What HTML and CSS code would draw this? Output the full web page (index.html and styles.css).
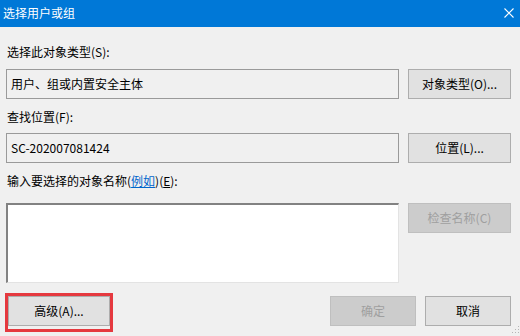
FILE: index.html
```html
<!DOCTYPE html>
<html lang="zh-CN">
<head>
  <meta charset="UTF-8" />
  <title>选择用户或组</title>
  <link rel="stylesheet" href="styles.css">
</head>
<body>

<div class="dialog">
  <header class="titlebar">
    <span class="title">选择用户或组</span>
    <span class="close">
      <svg viewBox="0 0 10 10" width="10" height="10"><path d="M0.5 0.5L9.5 9.5M9.5 0.5L0.5 9.5" stroke="#fff" stroke-width="1.1"/></svg>
    </span>
  </header>

  <main class="content">
    <div class="field-label label-first">选择此对象类型(S):</div>
    <div class="field-row">
      <div class="readonly-box">用户、组或内置安全主体</div>
      <button class="btn">对象类型(O)...</button>
    </div>

    <div class="field-label">查找位置(F):</div>
    <div class="field-row row-tight">
      <div class="readonly-box">SC-202007081424</div>
      <button class="btn">位置(L)...</button>
    </div>

    <div class="field-label">输入要选择的对象名称(<a href="#" class="link">例如</a>)(<u>E</u>):</div>
    <div class="field-row row-names">
      <div class="names-box"></div>
      <button class="btn btn-disabled">检查名称(C)</button>
    </div>
  </main>

  <footer class="footer">
    <button class="btn btn-advanced">高级(A)...</button>
    <div class="footer-actions">
      <button class="btn btn-small btn-disabled">确定</button>
      <button class="btn btn-small">取消</button>
    </div>
    <svg class="grip" viewBox="0 0 9 9" width="9" height="9">
      <rect x="7" y="1" width="1" height="1" fill="#b5b5b5"/>
      <rect x="4" y="4" width="1" height="1" fill="#b5b5b5"/>
      <rect x="7" y="4" width="1" height="1" fill="#b5b5b5"/>
      <rect x="1" y="7" width="1" height="1" fill="#b5b5b5"/>
      <rect x="4" y="7" width="1" height="1" fill="#b5b5b5"/>
      <rect x="7" y="7" width="1" height="1" fill="#b5b5b5"/>
    </svg>
  </footer>
</div>

</body>
</html>
```

FILE: styles.css
```css
:root {
  --dialog-bg: #f0f0f0;
  --title-bg: #0078d7;
  --text-color: #000000;
  --btn-bg: #e1e1e1;
  --btn-border: #adadad;
  --disabled-bg: #cccccc;
  --disabled-border: #bfbfbf;
  --disabled-text: #9f9f9f;
  --box-border: #9a9a9a;
  --link-color: #0066cc;
  --mark-color: #e5393f;
  --font-family: "Noto Sans CJK SC", "Noto Sans", sans-serif;
}

*, *::before, *::after { box-sizing: border-box; }

body {
  margin: 0;
  font-family: var(--font-family);
  font-size: 12px;
  line-height: 16px;
  color: var(--text-color);
  background-color: var(--dialog-bg);
}

.dialog {
  width: 520px;
  height: 336px;
  overflow: hidden;
  display: flex;
  flex-direction: column;
}

.titlebar {
  height: 27px;
  flex-shrink: 0;
  display: flex;
  justify-content: space-between;
  align-items: center;
  padding: 0 6px 1px 3px;
  background-color: var(--title-bg);
  color: #ffffff;
}

.close {
  display: flex;
  width: 10px;
  height: 10px;
  margin-top: -1px;
}

.content {
  padding: 0 9px 0 6px;
}

.field-label {
  margin-top: 10px;
  padding-left: 1px;
  white-space: nowrap;
}

.label-first { margin-top: 17px; }

.link {
  color: var(--link-color);
  text-decoration: underline;
}

.field-row {
  display: flex;
  gap: 9px;
  margin-top: 9px;
  height: 30px;
}

.row-tight { margin-top: 8px; }

.row-names {
  margin-top: 14px;
  height: 80px;
  align-items: flex-start;
}

.readonly-box {
  flex: 1;
  display: flex;
  align-items: center;
  padding: 0 0 1px 4px;
  border: 1px solid var(--box-border);
  background-color: var(--dialog-bg);
  white-space: nowrap;
}

.names-box {
  flex: 1;
  align-self: stretch;
  background-color: #ffffff;
  border-top: 2px solid #828282;
  border-left: 2px solid #828282;
  border-right: 1px solid #e3e3e3;
  border-bottom: 1px solid #e3e3e3;
}

.btn {
  width: 103px;
  height: 30px;
  flex-shrink: 0;
  padding: 0 0 1px;
  border: 1px solid var(--btn-border);
  background-color: var(--btn-bg);
  font-family: var(--font-family);
  font-size: 12px;
  line-height: 16px;
  color: var(--text-color);
  white-space: nowrap;
}

.btn-disabled {
  border-color: var(--disabled-border);
  background-color: var(--disabled-bg);
  color: var(--disabled-text);
}

.footer {
  position: relative;
  display: flex;
  justify-content: space-between;
  align-items: center;
  margin-top: 13px;
  padding: 0 9px 0 8px;
}

.btn-advanced {
  position: relative;
  width: 102px;
}

/* red annotation frame round the advanced button */
.btn-advanced::after {
  content: "";
  position: absolute;
  top: -4px;
  left: -4px;
  right: -4px;
  bottom: -7px;
  border: 3px solid var(--mark-color);
}

.footer-actions {
  display: flex;
  gap: 9px;
}

.btn-small { width: 86px; }

.grip {
  position: absolute;
  right: 0;
  top: 29px;
}
```
